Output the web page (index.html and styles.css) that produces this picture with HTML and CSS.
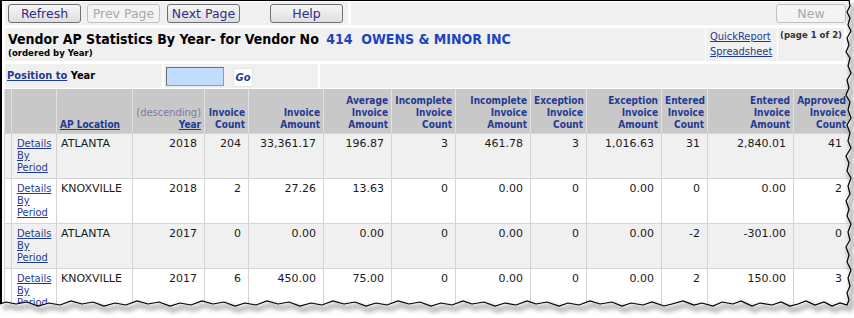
FILE: index.html
```html
<!DOCTYPE html>
<html lang="en">
<head>
    <meta charset="UTF-8">
    <title>Vendor AP Statistics By Year</title>
    <link rel="stylesheet" href="styles.css">
</head>
<body>
<div class="page">
    <div class="frame">

        <!-- Toolbar -->
        <div class="toolbar">
            <div class="tool-cell tool-left">
                <button class="btn">Refresh</button>
                <button class="btn" disabled>Prev Page</button>
                <button class="btn btn-next">Next Page</button>
                <button class="btn btn-help">Help</button>
            </div>
            <div class="tool-cell tool-right">
                <button class="btn btn-new" disabled>New</button>
            </div>
        </div>

        <!-- Title -->
        <div class="title-row">
            <div class="title-cell">
                <div class="title">Vendor AP Statistics By Year- for Vendor No <span class="vendor">414&nbsp; OWENS &amp; MINOR INC</span></div>
                <div class="subtitle">(ordered by Year)</div>
            </div>
            <div class="report-cell">
                <a href="#">QuickReport</a>
                <a href="#">Spreadsheet</a>
            </div>
            <div class="page-cell">(page 1 of 2)</div>
        </div>

        <!-- Position to -->
        <div class="pos-row">
            <div class="pos-cell pos-label"><a href="#">Position to</a> Year</div>
            <div class="pos-cell pos-input">
                <input type="text" class="year-input">
                <span class="go">Go</span>
            </div>
            <div class="pos-cell pos-rest"></div>
        </div>

        <!-- Statistics -->
        <table class="stats">
            <thead>
                <tr>
                    <th class="c0"></th>
                    <th class="c1"></th>
                    <th class="c2 left"><a href="#">AP Location</a></th>
                    <th class="c3"><span class="desc">(descending)</span><br><a href="#">Year</a></th>
                    <th class="c4">Invoice<br>Count</th>
                    <th class="c5">Invoice<br>Amount</th>
                    <th class="c6">Average<br>Invoice<br>Amount</th>
                    <th class="c7">Incomplete<br>Invoice<br>Count</th>
                    <th class="c8">Incomplete<br>Invoice<br>Amount</th>
                    <th class="c9">Exception<br>Invoice<br>Count</th>
                    <th class="c10">Exception<br>Invoice<br>Amount</th>
                    <th class="c11">Entered<br>Invoice<br>Count</th>
                    <th class="c12">Entered<br>Invoice<br>Amount</th>
                    <th class="c13">Approved<br>Invoice<br>Count</th>
                </tr>
            </thead>
            <tbody>
                <tr class="odd">
                    <td class="c0"></td>
                    <td class="details"><a href="#">Details<br>By<br>Period</a></td>
                    <td class="left">ATLANTA</td>
                    <td>2018</td><td>204</td><td>33,361.17</td><td>196.87</td>
                    <td>3</td><td>461.78</td><td>3</td><td>1,016.63</td>
                    <td>31</td><td>2,840.01</td><td>41</td>
                </tr>
                <tr>
                    <td class="c0"></td>
                    <td class="details"><a href="#">Details<br>By<br>Period</a></td>
                    <td class="left">KNOXVILLE</td>
                    <td>2018</td><td>2</td><td>27.26</td><td>13.63</td>
                    <td>0</td><td>0.00</td><td>0</td><td>0.00</td>
                    <td>0</td><td>0.00</td><td>2</td>
                </tr>
                <tr class="odd">
                    <td class="c0"></td>
                    <td class="details"><a href="#">Details<br>By<br>Period</a></td>
                    <td class="left">ATLANTA</td>
                    <td>2017</td><td>0</td><td>0.00</td><td>0.00</td>
                    <td>0</td><td>0.00</td><td>0</td><td>0.00</td>
                    <td>-2</td><td>-301.00</td><td>0</td>
                </tr>
                <tr>
                    <td class="c0"></td>
                    <td class="details"><a href="#">Details<br>By<br>Period</a></td>
                    <td class="left">KNOXVILLE</td>
                    <td>2017</td><td>6</td><td>450.00</td><td>75.00</td>
                    <td>0</td><td>0.00</td><td>0</td><td>0.00</td>
                    <td>2</td><td>150.00</td><td>3</td>
                </tr>
            </tbody>
        </table>
    </div>

    <!-- Torn screenshot edge -->
    <svg class="torn" width="854" height="318" viewBox="0 0 854 318">
        <defs>
            <filter id="soft" x="-5%" y="-5%" width="110%" height="110%">
                <feGaussianBlur stdDeviation="2.2"/>
            </filter>
        </defs>
        <polygon class="torn-fill" points="849,0 850,6 847,12 850,18 848,25 851,31 847,38 849,45 846,52 850,58 848,66 851,73 847,80 849,88 846,95 850,102 848,110 851,118 847,125 850,133 848,141 851,148 846,156 849,163 847,171 851,178 848,186 850,194 846,201 849,209 847,216 851,224 848,232 850,240 846,247 849,255 847,262 851,270 848,278 850,286 847,293 849,300 847,305 840,303 832,306 824,302 815,305 806,301 798,304 790,306 781,302 772,305 760,303 752,306 741,301 733,304 722,302 713,306 702,303 694,305 683,301 672,304 664,306 652,302 643,305 631,303 622,306 612,302 600,304 590,301 579,305 568,303 559,306 547,302 536,304 527,301 516,305 505,303 495,306 484,302 472,304 463,301 452,305 441,303 431,306 420,302 409,304 398,301 387,305 376,303 366,306 355,302 344,304 333,301 322,305 311,303 300,306 289,302 278,304 267,301 256,305 245,303 235,306 224,302 213,304 202,301 191,305 180,303 170,306 159,302 148,304 137,301 126,305 115,303 104,306 93,302 82,304 71,301 60,305 49,303 38,306 27,302 16,304 6,302 0,304 0,318 854,318 854,0"/>
        <polyline class="torn-shadow" filter="url(#soft)" transform="translate(3,4)" points="849,0 850,6 847,12 850,18 848,25 851,31 847,38 849,45 846,52 850,58 848,66 851,73 847,80 849,88 846,95 850,102 848,110 851,118 847,125 850,133 848,141 851,148 846,156 849,163 847,171 851,178 848,186 850,194 846,201 849,209 847,216 851,224 848,232 850,240 846,247 849,255 847,262 851,270 848,278 850,286 847,293 849,300 847,305 840,303 832,306 824,302 815,305 806,301 798,304 790,306 781,302 772,305 760,303 752,306 741,301 733,304 722,302 713,306 702,303 694,305 683,301 672,304 664,306 652,302 643,305 631,303 622,306 612,302 600,304 590,301 579,305 568,303 559,306 547,302 536,304 527,301 516,305 505,303 495,306 484,302 472,304 463,301 452,305 441,303 431,306 420,302 409,304 398,301 387,305 376,303 366,306 355,302 344,304 333,301 322,305 311,303 300,306 289,302 278,304 267,301 256,305 245,303 235,306 224,302 213,304 202,301 191,305 180,303 170,306 159,302 148,304 137,301 126,305 115,303 104,306 93,302 82,304 71,301 60,305 49,303 38,306 27,302 16,304 6,302 0,304"/>
        <polyline class="torn-edge" points="849,0 850,6 847,12 850,18 848,25 851,31 847,38 849,45 846,52 850,58 848,66 851,73 847,80 849,88 846,95 850,102 848,110 851,118 847,125 850,133 848,141 851,148 846,156 849,163 847,171 851,178 848,186 850,194 846,201 849,209 847,216 851,224 848,232 850,240 846,247 849,255 847,262 851,270 848,278 850,286 847,293 849,300 847,305 840,303 832,306 824,302 815,305 806,301 798,304 790,306 781,302 772,305 760,303 752,306 741,301 733,304 722,302 713,306 702,303 694,305 683,301 672,304 664,306 652,302 643,305 631,303 622,306 612,302 600,304 590,301 579,305 568,303 559,306 547,302 536,304 527,301 516,305 505,303 495,306 484,302 472,304 463,301 452,305 441,303 431,306 420,302 409,304 398,301 387,305 376,303 366,306 355,302 344,304 333,301 322,305 311,303 300,306 289,302 278,304 267,301 256,305 245,303 235,306 224,302 213,304 202,301 191,305 180,303 170,306 159,302 148,304 137,301 126,305 115,303 104,306 93,302 82,304 71,301 60,305 49,303 38,306 27,302 16,304 6,302 0,304"/>
    </svg>
</div>
</body>
</html>
```

FILE: styles.css
```css
/* Reset */
* {
    margin: 0;
    padding: 0;
    box-sizing: border-box;
}

body {
    font-family: "DejaVu Sans", Verdana, sans-serif;
    font-size: 11px;
    color: #1a1a1a;
    background-color: #fff;
}

a {
    color: #1f3a93;
}

/* Screenshot frame */
.page {
    position: relative;
    width: 854px;
    height: 318px;
    overflow: hidden;
}

.frame {
    height: 318px;
    border-left: 2px solid #000;
    border-top: 1px solid #000;
    padding: 1px 0 0 3px;
}

.torn {
    position: absolute;
    left: 0;
    top: 0;
}

.torn-fill {
    fill: #fff;
}

.torn-shadow {
    fill: none;
    stroke: #7a7a7a;
    stroke-width: 5;
    opacity: 0.55;
}

.torn-edge {
    fill: none;
    stroke: #000;
    stroke-width: 1.2;
}

/* Condensed face used for labels and links */
.title,
.subtitle,
.report-cell,
.page-cell,
.pos-label,
.go,
.stats th,
.details {
    font-family: "DejaVu Sans Condensed", "DejaVu Sans", sans-serif;
    font-stretch: condensed;
}

/* Toolbar */
.toolbar {
    display: flex;
    gap: 3px;
    height: 23px;
}

.tool-cell {
    display: flex;
    align-items: flex-start;
    padding-top: 2px;
    background-color: #f0f0f0;
}

.tool-left {
    width: 343px;
    padding-left: 3px;
    gap: 6px;
}

.tool-right {
    flex: 1;
    justify-content: flex-end;
    padding-right: 8px;
}

.btn {
    width: 73px;
    height: 19px;
    font-family: "DejaVu Sans", Verdana, sans-serif;
    font-size: 12.5px;
    line-height: 17px;
    color: #2d2d8c;
    background: linear-gradient(#f7f7f7, #dedede);
    border: 1px solid #707070;
    border-radius: 3px;
}

.btn:disabled {
    color: #a9a9a9;
    background: #f4f4f4;
    border-color: #c2c2c2;
}

.btn-next {
    margin-left: 1px;
}

.btn-help {
    margin-left: 24px;
}

.btn-new {
    width: 70px;
}

/* Title row */
.title-row {
    display: flex;
    gap: 1px;
    height: 33px;
    margin-top: 3px;
}

.title-cell {
    width: 700px;
    padding: 3px 3px 0;
    background-color: #f0f0f0;
}

.title {
    font-size: 14px;
    font-weight: bold;
    line-height: 16px;
    color: #000;
}

.vendor {
    margin-left: 3px;
    color: #1a44c2;
}

.subtitle {
    font-size: 9.5px;
    font-weight: bold;
    line-height: 12px;
    color: #000;
}

.report-cell {
    display: flex;
    flex-direction: column;
    width: 71px;
    padding: 0 0 0 4px;
    font-size: 11px;
    line-height: 15px;
    background-color: #f0f0f0;
}

.report-cell a:first-child {
    margin-top: 1px;
}

.page-cell {
    width: 66px;
    padding: 1px 0 0 2px;
    font-size: 9.5px;
    font-weight: bold;
    line-height: 12px;
    white-space: nowrap;
    color: #333;
    background-color: #f0f0f0;
}

/* Position row */
.pos-row {
    display: flex;
    gap: 2px;
    height: 24px;
    margin-top: 3px;
}

.pos-cell {
    background-color: #f0f0f0;
}

.pos-label {
    width: 157px;
    padding-left: 2px;
    font-size: 11px;
    font-weight: bold;
    line-height: 24px;
    color: #000;
}

.pos-input {
    display: flex;
    align-items: flex-start;
    width: 154px;
    padding: 3px 0 0 2px;
}

.year-input {
    width: 58px;
    height: 19px;
    background-color: #c0dcff;
    border: 1px solid #9a9a9a;
    border-top-color: #6e6e6e;
    border-left-color: #6e6e6e;
    outline: none;
}

.go {
    width: 20px;
    height: 19px;
    margin: 1px 0 0 9px;
    font-size: 11px;
    font-weight: bold;
    font-style: italic;
    line-height: 17px;
    text-align: center;
    color: #1f3a93;
    background-color: #fff;
    border: 1px solid #e4e4e4;
}

.pos-rest {
    flex: 1;
}

/* Statistics table */
.stats {
    width: 845px;
    margin: 1px 0 0 -1px;
    table-layout: fixed;
    border-collapse: separate;
    border-spacing: 0;
}

.stats th {
    height: 44px;
    padding: 0 3px 2px;
    font-size: 10px;
    font-weight: bold;
    line-height: 12px;
    text-align: right;
    vertical-align: bottom;
    white-space: nowrap;
    color: #1f3a93;
    background-color: #c8c8c8;
    border-left: 1px solid #e2e2e2;
}

.stats th .desc {
    font-size: 11px;
    font-weight: normal;
    color: #7a7aa6;
}

.stats td {
    height: 45px;
    padding: 4px 7px 0 4px;
    line-height: 12px;
    text-align: right;
    vertical-align: top;
    white-space: nowrap;
    border-left: 1px solid #d4d4d4;
    border-top: 1px solid #d4d4d4;
}

.stats tr.odd td {
    background-color: #f0f0f0;
}

.stats .left {
    text-align: left;
}

.stats th.left {
    padding-left: 3px;
}

.stats .c0 {
    padding: 0;
}

.stats td.details {
    padding-left: 5px;
    font-size: 11px;
    text-align: left;
}

.c0 { width: 7px; }
.c1 { width: 45px; }
.c2 { width: 76px; }
.c3 { width: 72px; }
.c4 { width: 44px; }
.c5 { width: 75px; }
.c6 { width: 68px; }
.c7 { width: 64px; }
.c8 { width: 75px; }
.c9 { width: 56px; }
.c10 { width: 75px; }
.c11 { width: 46px; }
.c12 { width: 86px; }
.c13 { width: 56px; }
```
